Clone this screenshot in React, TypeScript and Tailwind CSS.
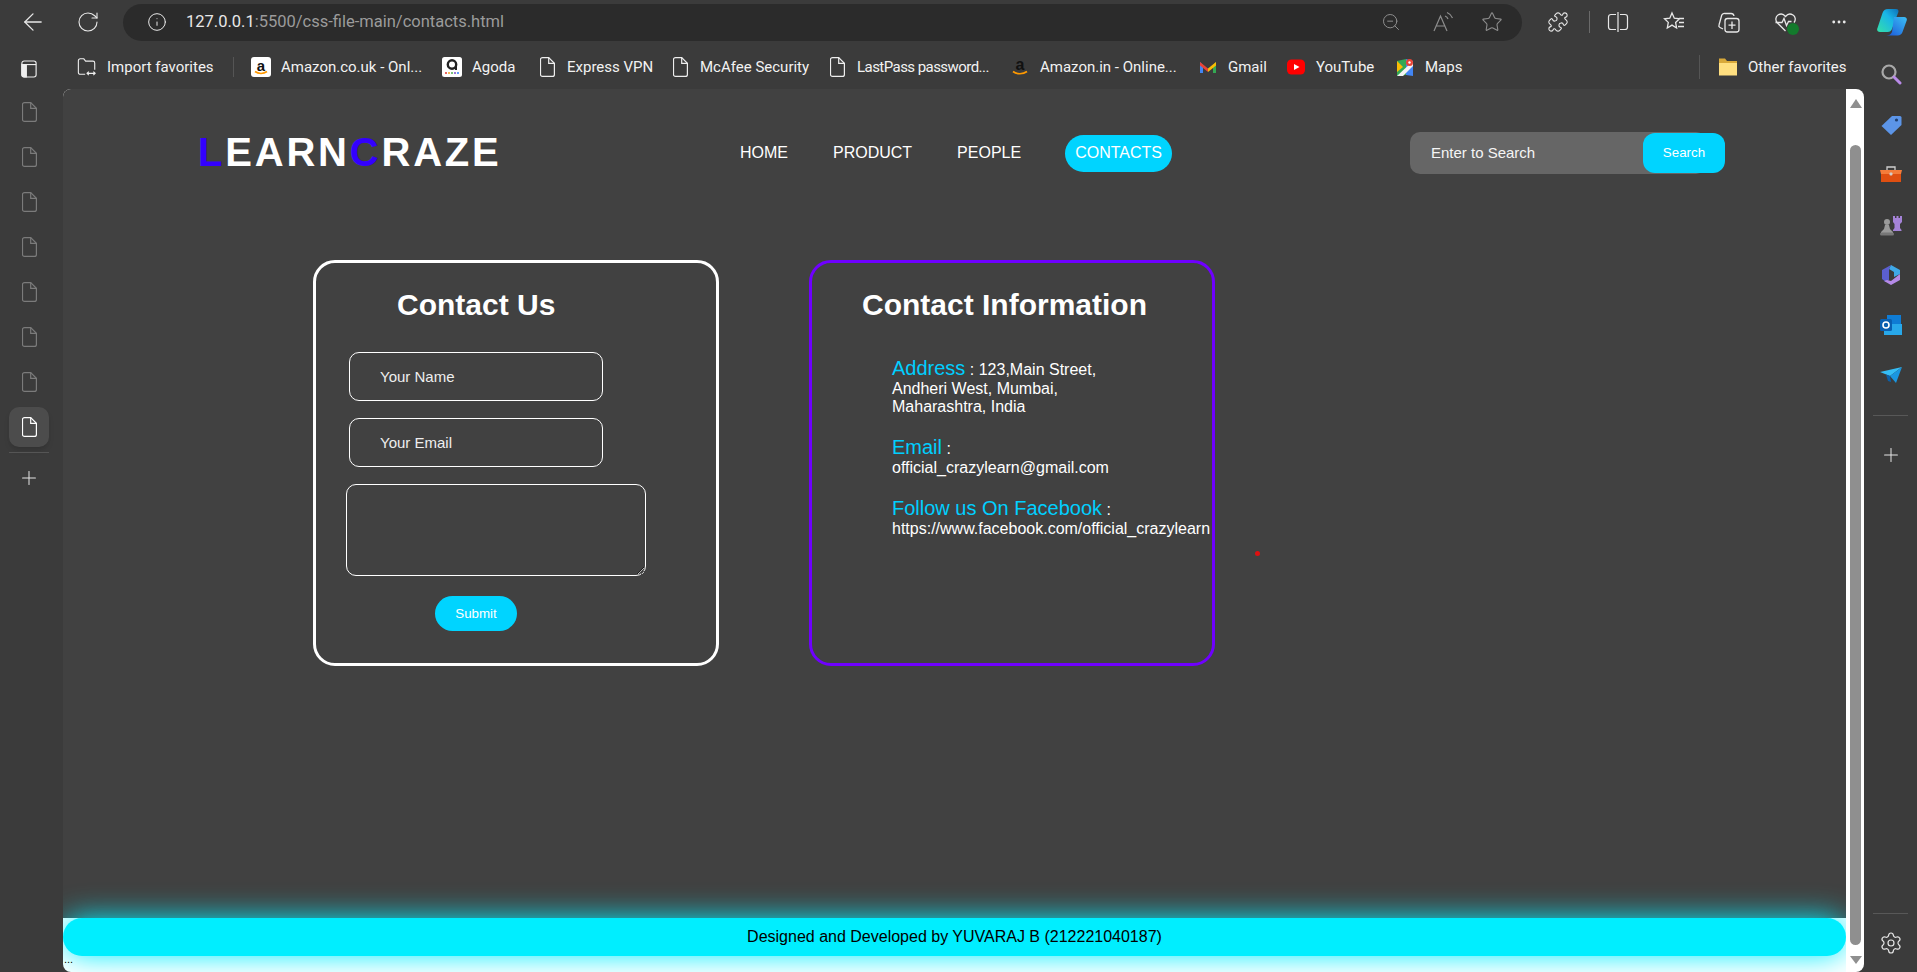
import { ArrowLeft, Info, MoreHorizontal, Plus, Puzzle, RotateCw, Settings, Star, ZoomOut } from 'lucide-react';
import type { ReactNode } from 'react';

function DocIcon({ className }: { className: string }) {
  return (
    <svg viewBox="0 0 15 20" className={className} fill="none" stroke="currentColor" strokeWidth="1.2">
      <path d="M2.5.6h6.2l5.7 5.7v11.1a2 2 0 0 1-2 2h-9.9a2 2 0 0 1-2-2V2.6a2 2 0 0 1 2-2z" />
      <path d="M8.7.6v5.7h5.7" />
    </svg>
  );
}

function AmazonIcon() {
  return (
    <svg viewBox="0 0 20 20" className="w-5 h-5">
      <rect width="20" height="20" rx="3" fill="#fff" />
      <text x="10" y="13.5" textAnchor="middle" fontSize="15" fontWeight="700" fontFamily="Liberation Sans" fill="#111">a</text>
      <path d="M4 14.5c3.5 2.6 8.5 2.6 12 0" stroke="#f90" strokeWidth="1.6" fill="none" />
    </svg>
  );
}

function AmazonInIcon() {
  return (
    <svg viewBox="0 0 20 20" className="w-5 h-5">
      <text x="10" y="13" textAnchor="middle" fontSize="16" fontWeight="700" fontFamily="Liberation Sans" fill="#111">a</text>
      <path d="M3 14.5c4 3 10 3 14 0" stroke="#f90" strokeWidth="1.7" fill="none" />
    </svg>
  );
}

function AgodaIcon() {
  return (
    <svg viewBox="0 0 20 20" className="w-5 h-5">
      <rect width="20" height="20" rx="2.5" fill="#fff" />
      <circle cx="10" cy="7.5" r="4.2" stroke="#222" strokeWidth="2.4" fill="none" />
      <path d="M14 6v7" stroke="#222" strokeWidth="2" />
      <circle cx="4" cy="16" r="1" fill="#e3342f" />
      <circle cx="7" cy="16" r="1" fill="#f6a623" />
      <circle cx="10" cy="16" r="1" fill="#4caf50" />
      <circle cx="13" cy="16" r="1" fill="#7b4fc9" />
      <circle cx="16" cy="16" r="1" fill="#2d7ff9" />
    </svg>
  );
}

function GmailIcon() {
  return (
    <svg viewBox="0 0 20 20" className="w-5 h-5">
      <path d="M2 5v11h3V8z" fill="#4285f4" />
      <path d="M18 5v11h-3V8z" fill="#34a853" />
      <path d="M2 5l8 6.5V15L2 8.5z" fill="#ea4335" />
      <path d="M18 5l-8 6.5V15l8-6.5z" fill="#fbbc04" />
    </svg>
  );
}

function YoutubeIcon() {
  return (
    <svg viewBox="0 0 20 20" className="w-5 h-5">
      <rect x="1" y="2.5" width="18" height="15" rx="4.5" fill="#f00" />
      <path d="M8 7l5.5 3L8 13z" fill="#fff" />
    </svg>
  );
}

function MapsIcon() {
  return (
    <svg viewBox="0 0 20 20" className="w-5 h-5">
      <path d="M2 4l9-2v16l-9 1z" fill="#34a853" />
      <path d="M11 2l7 2v15l-7-1z" fill="#4285f4" />
      <path d="M2 19L18 4v5L8 19z" fill="#f4f4f4" />
      <path d="M2 4l6 6-6 5z" fill="#fbbc04" />
      <circle cx="14.5" cy="5.5" r="3.5" fill="#ea4335" />
      <circle cx="14.5" cy="5.5" r="1.2" fill="#fff" />
    </svg>
  );
}

function FolderIcon() {
  return (
    <svg viewBox="0 0 20 20" className="w-5 h-5">
      <path d="M1 1.5h6l2 2.500h10v14H1z" fill="#d9a93a" />
      <path d="M1 6h18v12.500H1z" fill="#ffdf80" />
    </svg>
  );
}

function ImportIcon() {
  return (
    <svg viewBox="0 0 22 22" className="w-[22px] h-[22px]" fill="none" stroke="#eee" strokeWidth="1.2">
      <path d="M9 19H3.5a2 2 0 0 1-2-2V4a2 2 0 0 1 2-2h4l2 2.5h8a2 2 0 0 1 2 2V14" />
      <path d="M11 18h9M13 16l-2 2 2 2M18 16l2 2-2 2" />
    </svg>
  );
}

function Bookmark({ icon, label, textClass }: { icon: ReactNode; label: string; textClass: string }) {
  return (
    <div className="flex items-center shrink-0">
      <span className="w-5 flex justify-center">{icon}</span>
      <span className={`ml-[10px] whitespace-nowrap text-[15px] text-[#f2f2f2] ${textClass}`}>{label}</span>
    </div>
  );
}

function TopBar() {
  return (
    <div className="h-11 flex items-center text-[#e8e8e8] shrink-0">
      <ArrowLeft className="ml-[19px] w-[28px] h-[28px]" strokeWidth={1.1} />
      <RotateCw className="ml-[29px] w-[24px] h-[24px]" strokeWidth={1.1} />
      <div className="ml-[23px] w-[1399px] h-[37px] rounded-full bg-[#2b2b2b] flex items-center">
        <Info className="ml-[24px] w-[20px] h-[20px]" strokeWidth={1.2} />
        <span className="ml-[19px] text-[16.5px]">
          127.0.0.1<span className="text-[#9b9b9b]">:5500/css-file-main/contacts.html</span>
        </span>
        <ZoomOut className="ml-auto w-[20px] h-[20px] text-[#8d8d8d]" strokeWidth={1.2} />
        <svg viewBox="0 0 22 22" className="ml-[31px] w-[22px] h-[22px] text-[#8d8d8d]" fill="none" stroke="currentColor" strokeWidth="1.2">
          <path d="M2 20L8.500 5 15 20M4.500 15h8M13 5c1.500.5 2.500 1.500 3 3M15 1.500c2.500 1 4.500 3 5.500 5.500" />
        </svg>
        <Star className="ml-[27px] mr-[19px] w-[22px] h-[22px] text-[#8d8d8d]" strokeWidth={1.2} />
      </div>
      <Puzzle className="ml-[25px] w-[22px] h-[22px]" strokeWidth={1.2} />
      <div className="ml-[20px] w-px h-[22px] bg-[#6a6a6a]" />
      <svg viewBox="0 0 22 22" className="ml-[17px] w-[22px] h-[22px]" fill="none" stroke="currentColor" strokeWidth="1.2">
        <path d="M9 3.500H4a2.500 2.500 0 0 0-2.500 2.500v10A2.500 2.500 0 0 0 4 18.500h5M13 3.500h5A2.500 2.500 0 0 1 20.500 6v10a2.500 2.500 0 0 1-2.500 2.500h-5M11 1v20" />
      </svg>
      <svg viewBox="0 0 24 24" className="ml-[33px] w-[24px] h-[24px]" fill="none" stroke="currentColor" strokeWidth="1.3">
        <path d="M10 3l2.300 5.200 5.200.6-3.900 3.600 1 5.600L10 15.100l-4.700 2.900 1-5.600-3.800-3.600 5.300-.6zM17 8.500h5M17 12.500h5M16 16.500h6" />
      </svg>
      <svg viewBox="0 0 24 24" className="ml-[31px] w-[24px] h-[24px]" fill="none" stroke="currentColor" strokeWidth="1.3">
        <path d="M6 19l-3-1.500a2 2 0 0 1-1-2.500l2.500-9A3 3 0 0 1 8 3.500h6a3 3 0 0 1 3 2.500" />
        <rect x="8" y="8.500" width="14" height="13.500" rx="2.500" />
        <path d="M15 11.500v7.500M11.500 15.200h7" />
      </svg>
      <div className="relative ml-[33px] w-[24px] h-[24px]">
        <svg viewBox="0 0 24 24" className="w-[24px] h-[24px]" fill="none" stroke="currentColor" strokeWidth="1.3">
          <path d="M11.500 21L3.500 13C1 10.500 1.500 6.500 4 5c2.500-1.500 5.500-1 7.500 1.500 2-2.500 5-3 7.500-1.500 2.500 1.500 3 5 1 7.500" />
          <path d="M1.500 12.500H8l2-4 2.500 7 2-4h3" />
        </svg>
        <span className="absolute -right-[1px] -bottom-[1px] w-[12px] h-[12px] rounded-full bg-[#137a2c]" />
      </div>
      <MoreHorizontal className="ml-[32px] w-[18px] h-[18px]" strokeWidth={1.8} />
      <svg viewBox="0 0 30 28" className="ml-[29px] w-[30px] h-[28px]">
        <defs>
          <linearGradient id="cp1" x1="0" y1="1" x2="1" y2="0">
            <stop offset="0" stopColor="#35e0a8" />
            <stop offset="0.6" stopColor="#19b5e8" />
            <stop offset="1" stopColor="#0c6fb8" />
          </linearGradient>
          <linearGradient id="cp2" x1="0" y1="1" x2="1" y2="0">
            <stop offset="0" stopColor="#1a55d8" />
            <stop offset="1" stopColor="#3cc0f5" />
          </linearGradient>
        </defs>
        <path d="M11 1h8c2.500 0 3 2 2 4l-6 16c-.8 2-2 3-4.500 3H3c-2.500 0-3.500-2-2.500-4l5-15C6.500 2.500 8 1 11 1z" fill="url(#cp1)" />
        <path d="M17 9h10c2.500 0 3.500 2 2.500 4l-4 11c-.8 2.200-2.300 3.500-5 3.500H9c3 0 5-1 6-3.500z" fill="url(#cp2)" />
      </svg>
    </div>
  );
}

function BookmarksBar() {
  return (
    <div className="h-[45px] flex items-center pl-[77px] pt-[1px] shrink-0 text-[#eeeeee]">
      <Bookmark icon={<ImportIcon />} label="Import favorites" textClass="w-[105px]" />
      <div className="ml-[21px] w-px h-[20px] bg-[#555]" />
      <div className="ml-[17px]"><Bookmark icon={<AmazonIcon />} label="Amazon.co.uk - Onl..." textClass="w-[141px]" /></div>
      <div className="ml-[20px]"><Bookmark icon={<AgodaIcon />} label="Agoda" textClass="w-[44px]" /></div>
      <div className="ml-[21px]"><Bookmark icon={<DocIcon className="w-[15px] h-5" />} label="Express VPN" textClass="w-[81px]" /></div>
      <div className="ml-[22px]"><Bookmark icon={<DocIcon className="w-[15px] h-5" />} label="McAfee Security" textClass="w-[108px]" /></div>
      <div className="ml-[19px]"><Bookmark icon={<DocIcon className="w-[15px] h-5" />} label="LastPass password..." textClass="w-[133px] tracking-[-0.55px]" /></div>
      <div className="ml-[20px]"><Bookmark icon={<AmazonInIcon />} label="Amazon.in - Online..." textClass="w-[138px]" /></div>
      <div className="ml-[20px]"><Bookmark icon={<GmailIcon />} label="Gmail" textClass="w-[38px]" /></div>
      <div className="ml-[20px]"><Bookmark icon={<YoutubeIcon />} label="YouTube" textClass="w-[58px]" /></div>
      <div className="ml-[21px]"><Bookmark icon={<MapsIcon />} label="Maps" textClass="w-[36px]" /></div>
      <div className="ml-[238px] w-px h-[24px] bg-[#555]" />
      <div className="ml-[18px]"><Bookmark icon={<FolderIcon />} label="Other favorites" textClass="w-[100px]" /></div>
    </div>
  );
}

function LeftRail() {
  const tabs = [1, 2, 3, 4, 5, 6, 7];
  return (
    <div className="w-[63px] shrink-0 flex flex-col items-center pr-[5px] text-[#7b7b7b] -mt-[45px]">
      <svg viewBox="0 0 18 20" className="mt-[16px] w-[16px] h-[18px] text-[#eee]" fill="none" stroke="currentColor" strokeWidth="1.3">
        <rect x="1" y="1" width="16" height="18" rx="2.5" />
        <path d="M1 5h16" />
        <path d="M1 5h5v14H3.500A2.500 2.500 0 0 1 1 16.500z" fill="currentColor" />
      </svg>
      <div className="mt-[24px] flex flex-col gap-[25px] pl-[1px]">
        {tabs.map((tab) => (
          <DocIcon key={tab} className="w-[15px] h-5" />
        ))}
      </div>
      <div className="mt-[15px] w-10 h-10 rounded-[10px] bg-[#4c4c4c] shadow-md flex items-center justify-center text-white">
        <DocIcon className="w-[15px] h-5" />
      </div>
      <div className="mt-[5px] w-10 h-px bg-[#555]" />
      <Plus className="mt-[14px] w-[22px] h-[22px] text-[#e6e6e6]" strokeWidth={1.1} />
    </div>
  );
}

function Header() {
  return (
    <header className="flex items-center pt-[43px] pl-[135px]">
      <div className="w-[542px] mb-[2px] text-[40px] leading-[40px] font-bold tracking-[2.8px] text-white">
        <span className="text-[#3300ff]">L</span>EARN<span className="text-[#3300ff]">C</span>RAZE
      </div>
      <nav className="flex items-center gap-[45px] text-[16px] leading-[18px] text-white">
        <span>HOME</span>
        <span>PRODUCT</span>
        <span>PEOPLE</span>
        <span className="-ml-[1px] h-[37px] px-[10px] flex items-center rounded-full bg-[#00d4ff]">CONTACTS</span>
      </nav>
      <div className="ml-[238px] flex items-center">
        <input
          placeholder="Enter to Search"
          className="w-[296px] h-[42px] pl-[21px] pb-[2px] rounded-[10px] bg-[#666666] text-[15px] outline-none placeholder:text-[#f5f5f5]"
        />
        <button className="-ml-[63px] w-[82px] h-10 rounded-[12px] bg-[#00d4ff] text-[13.33px] text-white">
          Search
        </button>
      </div>
    </header>
  );
}

function ContactForm() {
  return (
    <div className="w-[406px] h-[406px] border-[3px] border-white rounded-[22px]">
      <h2 className="ml-[81px] mt-[25px] text-[30px] leading-[34px] font-bold text-white">Contact Us</h2>
      <input
        placeholder="Your Name"
        className="block ml-[33px] mt-[30px] w-[254px] h-[49px] pl-[30px] border border-white rounded-[10px] bg-transparent text-[15px] outline-none placeholder:text-[#eeeeee]"
      />
      <input
        placeholder="Your Email"
        className="block ml-[33px] mt-[17px] w-[254px] h-[49px] pl-[30px] border border-white rounded-[10px] bg-transparent text-[15px] outline-none placeholder:text-[#eeeeee]"
      />
      <textarea className="block ml-[30px] mt-[17px] w-[300px] h-[92px] border border-white rounded-[10px] bg-transparent outline-none" />
      <button className="block ml-[119px] mt-[20px] w-[82px] h-[35px] rounded-full bg-[#00d4ff] text-[13.33px] text-white">
        Submit
      </button>
    </div>
  );
}

function ContactInfo() {
  return (
    <div className="w-[406px] h-[406px] border-[3px] border-[#6f00ff] rounded-[22px] text-white text-[16px]">
      <h2 className="ml-[50px] mt-[25px] text-[30px] leading-[34px] font-bold">Contact Information</h2>
      <div className="ml-[80px] mt-[35px] whitespace-nowrap leading-[1.15]">
        <p>
          <span className="text-[20px] text-[#00cfff]">Address</span> : 123,Main Street,
          <br />
          Andheri West, Mumbai,
          <br />
          Maharashtra, India
        </p>
        <p className="mt-[19px]">
          <span className="text-[20px] text-[#00cfff]">Email</span> :
          <br />
          official_crazylearn@gmail.com
        </p>
        <p className="mt-[20px]">
          <span className="text-[20px] text-[#00cfff]">Follow us On Facebook</span> :
          <br />
          https://www.facebook.com/official_crazylearn
        </p>
      </div>
    </div>
  );
}

function Scrollbar() {
  return (
    <div className="w-[18px] shrink-0 bg-white rounded-tr-[8px] rounded-br-[8px] flex flex-col items-center pl-[1px]">
      <div className="mt-[10px] w-0 h-0 border-x-[6px] border-x-transparent border-b-[9px] border-b-[#8f8f8f]" />
      <div className="mt-[37px] w-[11px] h-[800px] rounded-full bg-[#8f8f8f]" />
      <div className="mt-[11px] w-0 h-0 border-x-[6px] border-x-transparent border-t-[8px] border-t-[#8f8f8f]" />
    </div>
  );
}

function RightRail() {
  return (
    <div className="w-[53px] shrink-0 flex flex-col items-center -mt-[45px] text-[#e6e6e6]">
      <svg viewBox="0 0 22 22" className="mt-[19px] w-[22px] h-[22px]" fill="none">
        <circle cx="9" cy="9" r="6.500" stroke="#a8a8a8" strokeWidth="2.200" />
        <path d="M14 14l6 6" stroke="#b98ae8" strokeWidth="3" strokeLinecap="round" />
      </svg>
      <svg viewBox="0 0 22 22" className="mt-[29px] w-[22px] h-[22px]">
        <path d="M12 2h8a1.500 1.500 0 0 1 1.500 1.500V11L11 21 1.500 12z" fill="#5c95e8" />
        <circle cx="16.500" cy="6" r="1.600" fill="#1f3f70" />
      </svg>
      <svg viewBox="0 0 22 22" className="mt-[28px] w-[22px] h-[22px]">
        <path d="M7 6V3h8v3" stroke="#cfcfcf" strokeWidth="1.300" fill="none" />
        <path d="M0 6h22l-1 4H1z" fill="#f57c3a" />
        <path d="M1 10h20v8H1z" fill="#df4f11" />
        <rect x="9.500" y="8.500" width="3" height="3" rx="1" fill="#cfcfcf" />
      </svg>
      <svg viewBox="0 0 22 22" className="mt-[28px] w-[22px] h-[22px]">
        <path d="M13 2h2v2h1.500V2h2v2H20V2h2v6l-2 2v4l1.500 2v1H13v-1l1.500-2v-4L13 8z" fill="#a583d8" />
        <circle cx="7" cy="8" r="3" fill="#9a9a9a" />
        <path d="M5 11h4l1 4 3 3v1H1v-1l3-3z" fill="#9a9a9a" />
        <rect x="0" y="18.500" width="14" height="3" rx="1.500" fill="#777" />
      </svg>
      <svg viewBox="0 0 22 22" className="mt-[28px] w-[22px] h-[22px]">
        <path d="M11 1l9 5v4l-6 3V8L9 5z" fill="#3fa9e8" />
        <path d="M2 6l9-5-2 4v11l-3 2-4-3z" fill="#5b5fd0" />
        <path d="M20 10v6l-9 5-7-4 3-1 4 1z" fill="#b58ae8" />
      </svg>
      <svg viewBox="0 0 22 22" className="mt-[28px] w-[22px] h-[22px]">
        <path d="M7 1h14v9H7z" fill="#0f7cd4" />
        <path d="M4 10h18v11H4z" fill="#28a8ea" />
        <rect x="0" y="5" width="12" height="12" rx="1.500" fill="#0a5fb0" />
        <circle cx="6" cy="11" r="3" fill="none" stroke="#fff" strokeWidth="1.600" />
      </svg>
      <svg viewBox="0 0 22 22" className="mt-[28px] w-[22px] h-[22px]">
        <path d="M0 8l22-5-12 9z" fill="#35bdf5" />
        <path d="M22 3l-6 16-6-7z" fill="#1a96e0" />
        <path d="M6 10.500L10 12l1 6-3-1z" fill="#0b5fa8" />
      </svg>
      <div className="mt-[29px] w-[35px] h-px bg-[#585858]" />
      <Plus className="mt-[28px] w-[22px] h-[22px]" strokeWidth={1.1} />
      <div className="mt-[447px] w-[35px] h-px bg-[#585858]" />
      <Settings className="mt-[17px] w-[24px] h-[24px]" strokeWidth={1.2} />
    </div>
  );
}

function Page() {
  return (
    <main className="relative flex-1 min-w-0 flex flex-col bg-white rounded-tl-[8px] rounded-bl-[8px] overflow-hidden font-['Liberation_Sans',sans-serif]">
      <div className="flex-1 bg-[#414141]">
        <Header />
        <div className="flex gap-[90px] mt-[86px] ml-[250px]">
          <ContactForm />
          <ContactInfo />
        </div>
        <span className="absolute left-[1192px] top-[462px] w-[5px] h-[5px] rounded-full bg-[#e01010]" />
      </div>
      <footer className="relative h-[38px] shrink-0 rounded-[19px] bg-[#00eeff] shadow-[0_0_30px_#00eeff] flex items-center justify-center text-[16px] text-black">
        Designed and Developed by YUVARAJ B (212221040187)
      </footer>
      <div className="relative h-[16px] shrink-0 pl-[1px] text-[11px] leading-[6px] text-black">...</div>
    </main>
  );
}

export default function App() {
  return (
    <div className="h-screen w-full overflow-hidden flex flex-col bg-[#3b3b3b] font-['Roboto',sans-serif]">
      <TopBar />
      <BookmarksBar />
      <div className="flex-1 min-h-0 flex">
        <LeftRail />
        <Page />
        <Scrollbar />
        <RightRail />
      </div>
    </div>
  );
}
